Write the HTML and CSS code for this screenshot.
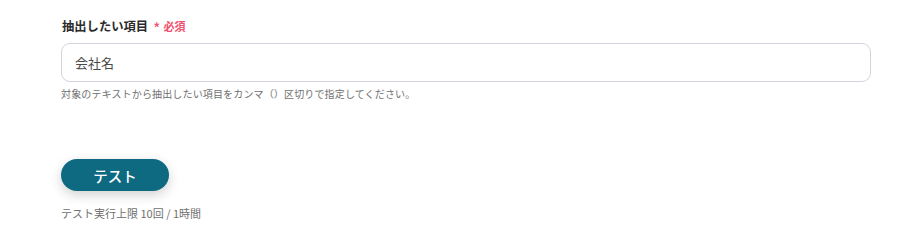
FILE: index.html
```html
<!DOCTYPE html>
<html lang="ja">
<head>
<meta charset="utf-8">
<link rel="stylesheet" href="styles.css">
</head>
<body>
<div class="page">
  <div class="field">
    <div class="label">抽出したい項目<span class="star">*</span><span class="req">必須</span></div>
    <div class="input">会社名</div>
    <div class="help">対象のテキストから抽出したい項目をカンマ（）区切りで指定してください。</div>
  </div>
  <div class="actions">
    <button class="btn">テスト</button>
    <div class="note">テスト実行上限 10回 / 1時間</div>
  </div>
</div>
</body>
</html>
```
FILE: styles.css
```css
html, body { margin: 0; padding: 0; background: #fff; }
body { font-family: "Noto Sans CJK JP", "Noto Sans", sans-serif; color: #333; }
.page { padding: 17px 36px 0 61px; }
.label { font-size: 12.3px; font-weight: 700; color: #2b2b2b; line-height: 18px; display: flex; align-items: center; padding-left: 1px; }
.star { color: #f0506e; font-size: 16px; margin-left: 5px; font-weight: 400; line-height: 18px; position: relative; top: 2px; }
.req { color: #f0506e; font-size: 11px; margin-left: 3px; font-weight: 700; }
.input { margin-top: 8px; height: 37px; border: 1px solid #d3d5dc; border-radius: 9px; display: flex; align-items: center; padding-left: 13px; font-size: 13px; color: #4a4a4a; }
.help { margin-top: 5px; font-size: 10px; letter-spacing: 0.15px; color: #707070; line-height: 14px; }
.actions { margin-top: 58px; }
.btn { width: 108px; height: 32px; border: none; border-radius: 16px; background: #0e6a80; color: #fff; font-family: inherit; font-size: 14.5px; font-weight: 500; box-shadow: 0 4px 12px rgba(0,0,0,0.18); padding: 0; display: block; }
.note { margin-top: 14px; font-size: 11px; color: #707070; line-height: 16px; }
```
